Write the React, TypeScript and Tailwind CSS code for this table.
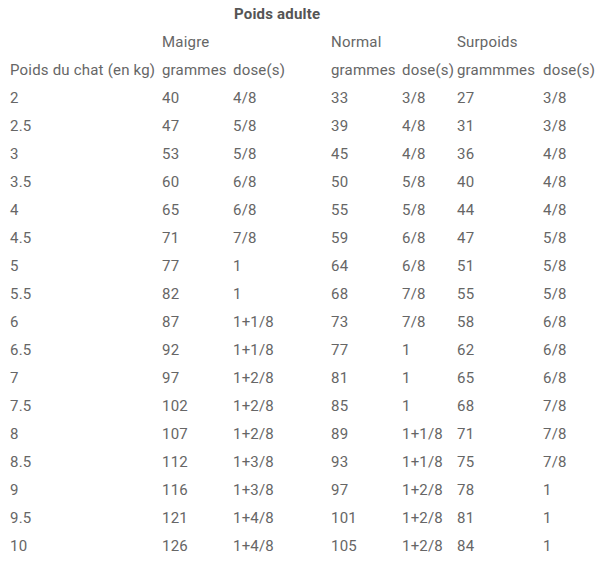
import React from "react";

const rows: string[][] = [
  ["2", "40", "4/8", "33", "3/8", "27", "3/8"],
  ["2.5", "47", "5/8", "39", "4/8", "31", "3/8"],
  ["3", "53", "5/8", "45", "4/8", "36", "4/8"],
  ["3.5", "60", "6/8", "50", "5/8", "40", "4/8"],
  ["4", "65", "6/8", "55", "5/8", "44", "4/8"],
  ["4.5", "71", "7/8", "59", "6/8", "47", "5/8"],
  ["5", "77", "1", "64", "6/8", "51", "5/8"],
  ["5.5", "82", "1", "68", "7/8", "55", "5/8"],
  ["6", "87", "1+1/8", "73", "7/8", "58", "6/8"],
  ["6.5", "92", "1+1/8", "77", "1", "62", "6/8"],
  ["7", "97", "1+2/8", "81", "1", "65", "6/8"],
  ["7.5", "102", "1+2/8", "85", "1", "68", "7/8"],
  ["8", "107", "1+2/8", "89", "1+1/8", "71", "7/8"],
  ["8.5", "112", "1+3/8", "93", "1+1/8", "75", "7/8"],
  ["9", "116", "1+3/8", "97", "1+2/8", "78", "1"],
  ["9.5", "121", "1+4/8", "101", "1+2/8", "81", "1"],
  ["10", "126", "1+4/8", "105", "1+2/8", "84", "1"],
];

export default function App() {
  return (
    <div className="bg-white w-[601px] h-[563px] pl-[10px] text-[#666666] text-[15px] tracking-[0.2px] font-['Roboto',sans-serif]">
      <div className="h-[28px] flex items-center pl-[224px] font-bold text-[#555555] pt-[1px]">Poids adulte</div>
      <table className="table-fixed border-collapse">
        <colgroup>
          <col className="w-[152px]" />
          <col className="w-[71px]" />
          <col className="w-[98px]" />
          <col className="w-[71px]" />
          <col className="w-[55px]" />
          <col className="w-[86px]" />
          <col className="w-[58px]" />
        </colgroup>
        <tbody>
          <tr className="h-[28px]">
            <td></td>
            <td className="p-0 whitespace-nowrap">Maigre</td>
            <td></td>
            <td className="p-0 whitespace-nowrap">Normal</td>
            <td></td>
            <td className="p-0 whitespace-nowrap">Surpoids</td>
            <td></td>
          </tr>
          <tr className="h-[28px]">
            <td className="p-0 whitespace-nowrap">Poids du chat (en kg)</td>
            <td className="p-0 whitespace-nowrap">grammes</td>
            <td className="p-0 whitespace-nowrap">dose(s)</td>
            <td className="p-0 whitespace-nowrap">grammes</td>
            <td className="p-0 whitespace-nowrap">dose(s)</td>
            <td className="p-0 whitespace-nowrap">grammmes</td>
            <td className="p-0 whitespace-nowrap">dose(s)</td>
          </tr>
          {rows.map((r, i) => (
            <tr key={i} className="h-[28px]">
              {r.map((c, j) => (
                <td key={j} className="p-0 whitespace-nowrap">
                  {c}
                </td>
              ))}
            </tr>
          ))}
        </tbody>
      </table>
    </div>
  );
}
